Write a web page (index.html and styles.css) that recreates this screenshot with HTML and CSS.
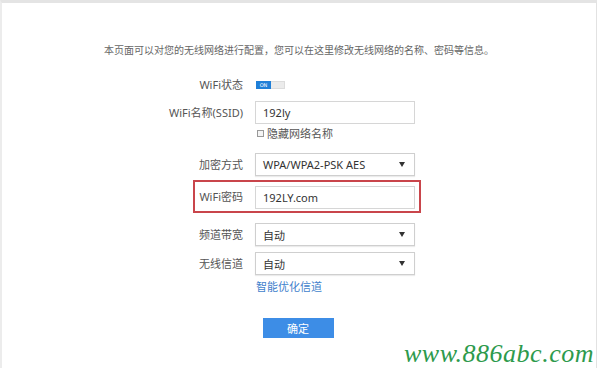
FILE: index.html
```html
<!DOCTYPE html>
<html lang="zh-CN">
<head>
<meta charset="utf-8">
<title>无线设置</title>
<link rel="stylesheet" href="styles.css">
</head>
<body>
<div class="panel">
  <p class="intro">本页面可以对您的无线网络进行配置，您可以在这里修改无线网络的名称、密码等信息。</p>
  <div class="form">
    <div class="row row-toggle">
      <span class="label">WiFi状态</span>
      <span class="toggle"><span class="toggle-on">ON</span><span class="toggle-off"></span></span>
    </div>
    <div class="row row-ssid">
      <span class="label">WiFi名称(SSID)</span>
      <span class="field">192ly</span>
    </div>
    <div class="row row-check">
      <span class="label"></span>
      <span class="check"><span class="box"></span>隐藏网络名称</span>
    </div>
    <div class="row row-enc">
      <span class="label">加密方式</span>
      <span class="field select">WPA/WPA2-PSK AES<i class="arrow"></i></span>
    </div>
    <div class="row row-pwd">
      <div class="highlight">
        <span class="label label-pwd">WiFi密码</span>
        <span class="field">192LY.com</span>
      </div>
    </div>
    <div class="row row-band">
      <span class="label">频道带宽</span>
      <span class="field select">自动<i class="arrow"></i></span>
    </div>
    <div class="row row-chan">
      <span class="label">无线信道</span>
      <span class="field select">自动<i class="arrow"></i></span>
    </div>
    <div class="row row-link">
      <span class="label"></span>
      <a class="link" href="#">智能优化信道</a>
    </div>
  </div>
  <div class="actions">
    <button class="btn" type="button">确定</button>
  </div>
</div>
<div class="watermark">www.886abc.com</div>
</body>
</html>
```

FILE: styles.css
```css
html, body {
  margin: 0;
  padding: 0;
  background: #fff;
}
body {
  width: 600px;
  height: 368px;
  overflow: hidden;
  position: relative;
  font-family: "Noto Sans", "Noto Sans CJK SC", sans-serif;
  color: #555;
}
.panel {
  box-sizing: border-box;
  width: 597px;
  height: 368px;
  border-top: 3px solid #e4e4e4;
  border-left: 2px solid #ececec;
  border-right: 1px solid #e2e2e2;
  padding-top: 40px;
}
.intro {
  margin: 0;
  height: 14px;
  line-height: 14px;
  font-size: 10px;
  color: #666;
  text-align: center;
  font-family: "Noto Sans CJK SC", sans-serif;
}
.form {
  display: flex;
  flex-direction: column;
  padding-left: 141px;
}
.row {
  display: flex;
  align-items: center;
  gap: 12px;
}
.label {
  width: 100px;
  text-align: right;
  font-size: 11px;
  color: #555;
  font-family: "Noto Sans", "Noto Sans CJK SC", sans-serif;
  line-height: 14px;
}
.row-toggle { margin-top: 21px; height: 14px; }
.row-ssid { margin-top: 9px; }
.row-check { margin-top: 2px; height: 14px; }
.row-enc { margin-top: 13px; }
.row-pwd { margin-top: 4px; }
.row-band { margin-top: 10px; }
.row-chan { margin-top: 6px; }
.row-link { margin-top: 4px; height: 14px; }

.toggle {
  display: flex;
  width: 29px;
  height: 8px;
  margin-left: 1px;
}
.toggle-on {
  width: 15px;
  background: #1f7fd8;
  color: #fff;
  font-size: 5px;
  line-height: 8px;
  text-align: center;
  font-family: "DejaVu Sans", sans-serif;
}
.toggle-off {
  flex: 1;
  background: #ebebeb;
  border: 1px solid #dcdcdc;
  border-left: none;
}
.field {
  box-sizing: border-box;
  width: 160px;
  height: 23px;
  border: 1px solid #d6d6d6;
  background: #fff;
  display: flex;
  align-items: center;
  padding-left: 7px;
  padding-right: 9px;
  font-size: 11px;
  color: #333;
  font-family: "Noto Sans", "Noto Sans CJK SC", sans-serif;
}
.select {
  justify-content: space-between;
  border-color: #cfcfcf;
  box-shadow: 0 1px 1px rgba(0,0,0,0.08);
}
.arrow {
  width: 0;
  height: 0;
  border-left: 3px solid transparent;
  border-right: 3px solid transparent;
  border-top: 5px solid #333;
}
.check {
  display: flex;
  align-items: center;
  gap: 3px;
  font-size: 11px;
  color: #555;
  margin-left: 2px;
  font-family: "Noto Sans CJK SC", sans-serif;
}
.box {
  box-sizing: border-box;
  width: 7px;
  height: 7px;
  border: 1px solid #999;
  background: #f4f4f4;
}
.highlight {
  box-sizing: border-box;
  margin-left: 50px;
  width: 228px;
  height: 33px;
  border: 2px solid #c9454b;
  display: flex;
  align-items: center;
  gap: 12px;
  padding-top: 1px;
}
.label-pwd {
  width: 48px;
}
.link {
  font-size: 11px;
  color: #3f7fcc;
  text-decoration: none;
  margin-left: 1px;
  font-family: "Noto Sans CJK SC", sans-serif;
}
.actions {
  display: flex;
  justify-content: center;
  margin-top: 25px;
  padding-right: 2px;
}
.btn {
  width: 71px;
  height: 20px;
  border: none;
  background: #3d8de6;
  color: #fff;
  font-size: 11px;
  padding: 0;
  font-family: "Noto Sans CJK SC", sans-serif;
}
.watermark {
  position: absolute;
  left: 404px;
  top: 339px;
  font-family: "Liberation Serif", serif;
  font-style: italic;
  font-size: 26px;
  line-height: 30px;
  color: #2d9a4c;
  letter-spacing: 0.5px;
}
```
